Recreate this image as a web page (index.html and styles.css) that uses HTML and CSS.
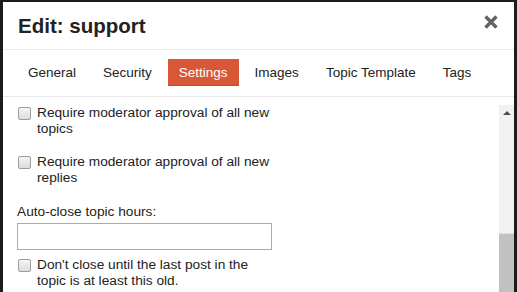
FILE: index.html
```html
<!DOCTYPE html>
<html lang="en">
<head>
  <meta charset="utf-8" />
  <title>Edit: support</title>
  <meta name="viewport" content="width=device-width, initial-scale=1" />
  <link rel="stylesheet" href="styles.css">
</head>
<body>
  <div class="modal">
    <div class="modal-header">
      <h3>Edit: support</h3>
      <a class="close" href="#" title="close">
        <svg width="14" height="14" viewBox="0 0 14 14">
          <path d="M1.5 1.5 L12.5 12.5 M12.5 1.5 L1.5 12.5" stroke="#646464" stroke-width="3.4" fill="none" />
        </svg>
      </a>
    </div>

    <ul class="nav-pills">
      <li><a href="#">General</a></li>
      <li><a href="#">Security</a></li>
      <li class="active"><a href="#">Settings</a></li>
      <li><a href="#">Images</a></li>
      <li><a href="#">Topic Template</a></li>
      <li><a href="#">Tags</a></li>
    </ul>

    <div class="modal-body">
      <div class="form">
        <label class="checkbox-label">
          <input type="checkbox" />
          <span>Require moderator approval of all new topics</span>
        </label>
        <label class="checkbox-label">
          <input type="checkbox" />
          <span>Require moderator approval of all new replies</span>
        </label>

        <div class="field">
          <label class="field-label">Auto-close topic hours:</label>
          <input type="text" class="hours" />
        </div>

        <label class="checkbox-label tight">
          <input type="checkbox" />
          <span>Don't close until the last post in the topic is at least this old.</span>
        </label>
      </div>

      <!-- fake scrollbar, like the one in the screenshot -->
      <div class="scrollbar">
        <div class="scroll-arrow"><i></i></div>
        <div class="scroll-thumb"></div>
      </div>
    </div>
  </div>
</body>
</html>
```

FILE: styles.css
```css
* {
  box-sizing: border-box;
  margin: 0;
  padding: 0;
}

html,
body {
  height: 100%;
}

body {
  background-color: #1c1c1c;
  padding: 2px 3px 0 3px;
  overflow: hidden;
  font-family: "Liberation Sans", Arial, sans-serif;
  color: #222;
}

.modal {
  height: 100%;
  background-color: #fff;
  display: flex;
  flex-direction: column;
}

.modal-header {
  display: flex;
  justify-content: space-between;
  align-items: flex-start;
  padding: 12px 16px 11px 15px;
  border-bottom: 1px solid #e9e9e9;
}

.modal-header h3 {
  font-size: 20.5px;
  line-height: 24px;
  font-weight: bold;
}

.close {
  display: block;
  margin-top: 1px;
  line-height: 0;
}

/* tabs */
.nav-pills {
  list-style: none;
  display: flex;
  gap: 5px;
  padding: 9px 14px 10px;
  border-bottom: 1px solid #e9e9e9;
}

.nav-pills a {
  display: block;
  padding: 0 11px;
  height: 27px;
  line-height: 27px;
  font-size: 13.5px;
  color: #222;
  text-decoration: none;
}

.nav-pills .active a {
  background-color: #d85737;
  border-bottom: 1px solid #c24a2d;
  color: #fff;
}

/* body */
.modal-body {
  flex: 1;
  display: flex;
  overflow: hidden;
}

.form {
  flex: 1;
  padding: 8px 0 0 14px;
  font-size: 13.7px;
  line-height: 16px;
}

.checkbox-label {
  display: flex;
  align-items: flex-start;
  width: 258px;
  margin-bottom: 17px;
  margin-left: 1px;
}

/* light grey box like the old windows checkbox */
.checkbox-label input {
  -webkit-appearance: none;
  appearance: none;
  width: 13px;
  height: 13px;
  margin: 2px 6px 0 0;
  flex-shrink: 0;
  border: 1px solid #9d9d9d;
  border-radius: 2px;
  background: linear-gradient(#f4f4f4, #dcdcdc);
}

.checkbox-label.tight {
  margin-top: 7px;
}

.field {
  margin-top: 18px;
}

.field-label {
  display: block;
}

.hours {
  display: block;
  width: 255px;
  height: 27px;
  margin-top: 3px;
  border: 1px solid #a9a9a9;
  background-color: #fff;
  outline: none;
}

.scrollbar {
  width: 15px;
  margin-top: 8px;
  background-color: #f1f1f1;
  display: flex;
  flex-direction: column;
}

.scroll-arrow {
  height: 16px;
  display: flex;
  justify-content: center;
  padding-top: 6px;
}

.scroll-arrow i {
  width: 0;
  height: 0;
  border-left: 4px solid transparent;
  border-right: 4px solid transparent;
  border-bottom: 4px solid #505050;
}

.scroll-thumb {
  flex: 1;
  margin-top: 112px;
  background-color: #c1c1c1;
  border-top: 1px solid #e0e0e0;
}
```
